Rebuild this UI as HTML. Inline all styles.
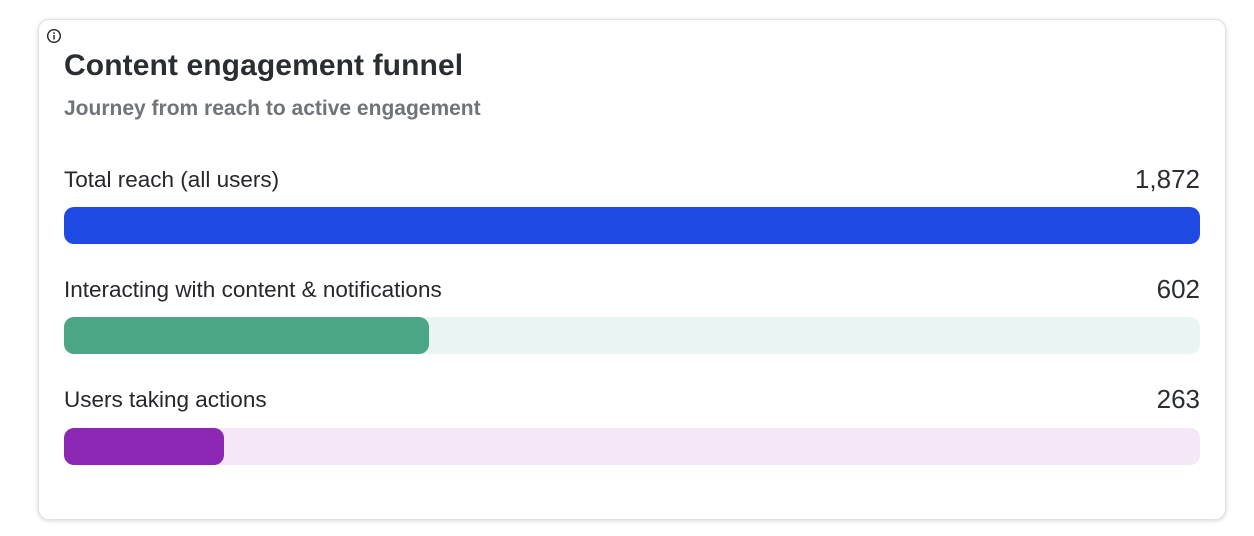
<!DOCTYPE html>
<html><head><style>
body{margin:0;width:1254px;height:536px;background:#fff;font-family:"Liberation Sans",Arial,sans-serif;position:relative;overflow:hidden}
.card{position:absolute;left:38px;top:19px;width:1188px;height:501px;border:1px solid #e0e1e3;border-radius:11px;box-shadow:0 1px 5px rgba(0,0,0,.16);box-sizing:border-box;background:#fff}
.t{position:absolute;left:64px;top:49px;font-size:30px;font-weight:bold;color:#2a2d31;white-space:nowrap;letter-spacing:0.1px}
.s{position:absolute;left:64px;top:97px;font-size:21px;font-weight:bold;color:#707378;white-space:nowrap}
.l{position:absolute;left:64px;font-size:22.5px;color:#25272b;white-space:nowrap}
.n{position:absolute;right:54px;font-size:26px;color:#2a2d31}
.b{position:absolute;left:64px;width:1136px;height:37px;border-radius:10px}
.f{height:100%;border-radius:10px}
</style></head><body>
<div class="card"></div>
<svg style="position:absolute;left:46px;top:28px" width="16" height="16" viewBox="0 0 16 16"><circle cx="8" cy="8" r="6.3" fill="none" stroke="#222" stroke-width="1.4"/><rect x="7.3" y="7" width="1.4" height="4.5" fill="#222"/><circle cx="8" cy="5" r="0.9" fill="#222"/></svg>
<div class="t">Content engagement funnel</div>
<div class="s">Journey from reach to active engagement</div>
<div class="l" style="top:167px">Total reach (all users)</div><div class="n" style="top:164px">1,872</div>
<div class="b" style="top:207px;background:#1f4ae3"></div>
<div class="l" style="top:277px">Interacting with content &amp; notifications</div><div class="n" style="top:274px">602</div>
<div class="b" style="top:317px;background:#e9f5f2"><div class="f" style="width:365px;background:#4ca685"></div></div>
<div class="l" style="top:387px">Users taking actions</div><div class="n" style="top:384px">263</div>
<div class="b" style="top:428px;background:#f4e8f6"><div class="f" style="width:160px;background:#8b27b3"></div></div>
</body></html>
